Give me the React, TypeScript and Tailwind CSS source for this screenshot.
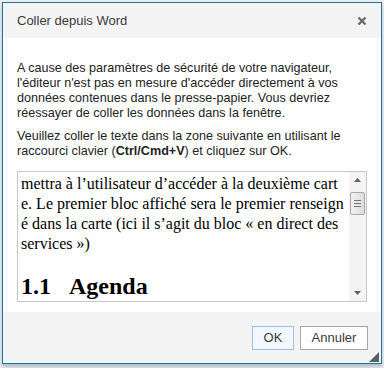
import React from "react"

function ScrollArrow({ up }: { up?: boolean }) {
    return (
        <svg width="7" height="4" viewBox="0 0 7 4" className="block">
            {up ? <path d="M0 4 L3.5 0 L7 4 Z" fill="#606060" /> : <path d="M0 0 L3.5 4 L7 0 Z" fill="#606060" />}
        </svg>
    )
}

export default function App() {
    return (
        <div className="w-[384px] h-[368px] bg-[#ebebeb] pt-[2px] pl-[2px] font-['Liberation_Sans',Arial,sans-serif] overflow-hidden">
            <div className="w-[380px] h-[362px] border border-[#1279a0] bg-white flex flex-col shadow-[0_3px_3px_rgba(120,140,170,0.45)]">
                {/* Title */}
                <div className="h-[35px] bg-[#f4f4f4] flex items-center justify-between pl-[14px] pr-[14px] shrink-0">
                    <span className="text-[13px] text-[#3a3a3a] pt-[1px]">Coller depuis Word</span>
                    <svg width="10" height="10" viewBox="0 0 10 10">
                        <path d="M1.5 1.5 L8.5 8.5 M8.5 1.5 L1.5 8.5" stroke="#6b6b6b" strokeWidth="2.4" />
                    </svg>
                </div>

                {/* Body */}
                <div className="flex-1 bg-white px-[14px] pt-[23px] text-[12.6px] leading-[15px] text-[#222]">
                    <p className="pr-[16px]">
                        A cause des paramètres de sécurité de votre navigateur, l'éditeur n'est pas en mesure d'accéder directement à vos données contenues dans le presse-papier. Vous devriez réessayer de coller les données dans la fenêtre.
                    </p>
                    <p className="mt-[8px] pr-[16px]">
                        Veuillez coller le texte dans la zone suivante en utilisant le raccourci clavier (<b>Ctrl/Cmd+V</b>) et cliquez sur OK.
                    </p>

                    {/* Paste area */}
                    <div className="mt-[12px] h-[131px] border border-[#c4c8cc] flex overflow-hidden">
                        <div className="flex-1 overflow-hidden pl-[3px] pt-[2px] font-['Liberation_Serif','Times_New_Roman',serif] text-[16px] leading-[20px] text-black">
                            <div className="whitespace-nowrap">mettra à l’utilisateur d’accéder à la deuxième cart</div>
                            <div className="whitespace-nowrap">e. Le premier bloc affiché sera le premier renseign</div>
                            <div className="whitespace-nowrap">é dans la carte (ici il s’agit du bloc « en direct des</div>
                            <div className="whitespace-nowrap">services »)</div>
                            <div className="mt-[18px] flex text-[24px] leading-[28px] font-bold whitespace-nowrap">
                                <span className="w-[48px]">1.1</span>
                                <span>Agenda</span>
                            </div>
                        </div>
                        {/* Scrollbar */}
                        <div className="w-[17px] bg-[#f4f4f4] flex flex-col items-center justify-between py-[6px] shrink-0">
                            <ScrollArrow up />
                            <div className="flex-1 w-full flex flex-col items-center pt-[10px]">
                                <div className="w-[15px] h-[23px] border border-[#a8a8a8] rounded-[2px] bg-gradient-to-r from-[#f2f2f2] to-[#dcdcdc] flex flex-col items-center justify-center gap-[2px]">
                                    <div className="w-[7px] h-px bg-[#777]" />
                                    <div className="w-[7px] h-px bg-[#777]" />
                                    <div className="w-[7px] h-px bg-[#777]" />
                                </div>
                            </div>
                            <ScrollArrow />
                        </div>
                    </div>
                </div>

                {/* Footer */}
                <div className="h-[51px] bg-[#f4f4f4] flex items-start justify-end pr-[13px] pt-[14px] gap-[6px] shrink-0 relative">
                    <button className="w-[42px] h-[24px] border border-[#98bff0] bg-[#f3f8ff] text-[13px] text-[#3a3a3a]">OK</button>
                    <button className="w-[68px] h-[24px] border border-[#a6a6a6] bg-white text-[13px] text-[#3a3a3a]">Annuler</button>
                    <svg width="10" height="10" viewBox="0 0 10 10" className="absolute right-[2px] bottom-[1px]">
                        <path d="M10 0 L10 10 L0 10 Z" fill="#5f5f5f" />
                    </svg>
                </div>
            </div>
        </div>
    )
}
